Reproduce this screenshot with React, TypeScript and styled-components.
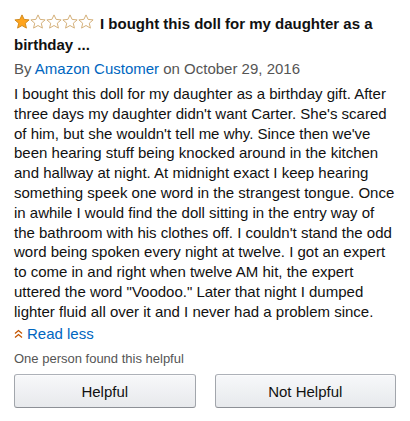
import { createGlobalStyle, styled } from "styled-components";

const Global = createGlobalStyle`
  body {
    margin: 0;
    background: #fff;
    font-family: "Liberation Sans", Arial, sans-serif;
    color: #111;
  }
`;

const Review = styled.section`
  padding: 14px 14px 0 14px;
  width: 382px;
`;

const Title = styled.h3`
  margin: 0;
  font-size: 15px;
  line-height: 20.5px;
  font-weight: 700;
  color: #111;
`;

const Stars = styled.span`
  display: inline-flex;
  vertical-align: baseline;
  margin-right: 6px;
`;

const Byline = styled.div`
  font-size: 15px;
  line-height: 20px;
  color: #555;
  margin-top: 4px;
`;

const Author = styled.a`
  color: #0066c0;
  text-decoration: none;
`;

const Body = styled.p`
  margin: 5px 0 0 0;
  font-size: 15px;
  line-height: 19.8px;
  color: #111;
`;

const ReadLess = styled.a`
  display: flex;
  align-items: center;
  gap: 4px;
  margin-top: 2px;
  font-size: 15px;
  line-height: 20px;
  color: #0066c0;
  text-decoration: none;
`;

const Helpful = styled.div`
  font-size: 13px;
  line-height: 18px;
  color: #555;
  margin-top: 6px;
`;

const Buttons = styled.div`
  display: grid;
  grid-template-columns: 1fr 1fr;
  gap: 19px;
  margin-top: 6.5px;
`;

const Button = styled.button`
  height: 34px;
  border: 1px solid #adb1b8;
  border-color: #adb1b8 #a2a6ac #8d9096;
  border-radius: 3px;
  background: linear-gradient(to bottom, #f7f8fa, #e7e9ec);
  box-shadow: 0 1px 0 rgba(255, 255, 255, 0.6) inset;
  font-family: "Liberation Sans", Arial, sans-serif;
  font-size: 15px;
  color: #111;
`;

function Star({ filled }: { filled: boolean }) {
  return (
    <svg width="16" height="15" viewBox="0 0 16 15">
      <path
        d="M8 0.9 L10.1 5.4 L15.1 5.9 L11.3 9.2 L12.4 14.1 L8 11.5 L3.6 14.1 L4.7 9.2 L0.9 5.9 L5.9 5.4 Z"
        fill={filled ? "#ffa41c" : "#fff"}
        stroke={filled ? "#d18b1f" : "#d4b07a"}
        strokeWidth="1"
        strokeLinejoin="round"
      />
    </svg>
  );
}

function Chevrons() {
  return (
    <svg width="9" height="10" viewBox="0 0 9 10">
      <path d="M1 4.5 L4.5 1.5 L8 4.5 M1 8.5 L4.5 5.5 L8 8.5" fill="none" stroke="#c45500" strokeWidth="1.3" />
    </svg>
  );
}

export default function App() {
  return (
    <>
      <Global />
      <Review>
        <Title>
          <Stars>
            {[0, 1, 2, 3, 4].map((i) => (
              <Star key={i} filled={i === 0} />
            ))}
          </Stars>
          I bought this doll for my daughter as a birthday ...
        </Title>
        <Byline>
          By <Author href="#">Amazon Customer</Author> on October 29, 2016
        </Byline>
        <Body>
          I bought this doll for my daughter as a birthday gift. After three days my daughter didn't want
          Carter. She's scared of him, but she wouldn't tell me why. Since then we've been hearing stuff
          being knocked around in the kitchen and hallway at night. At midnight exact I keep hearing
          something speek one word in the strangest tongue. Once in awhile I would find the doll sitting
          in the entry way of the bathroom with his clothes off. I couldn't stand the odd word being
          spoken every night at twelve. I got an expert to come in and right when twelve AM hit, the
          expert uttered the word "Voodoo." Later that night I dumped lighter fluid all over it and I
          never had a problem since.
        </Body>
        <ReadLess href="#">
          <Chevrons />
          Read less
        </ReadLess>
        <Helpful>One person found this helpful</Helpful>
        <Buttons>
          <Button>Helpful</Button>
          <Button>Not Helpful</Button>
        </Buttons>
      </Review>
    </>
  );
}
